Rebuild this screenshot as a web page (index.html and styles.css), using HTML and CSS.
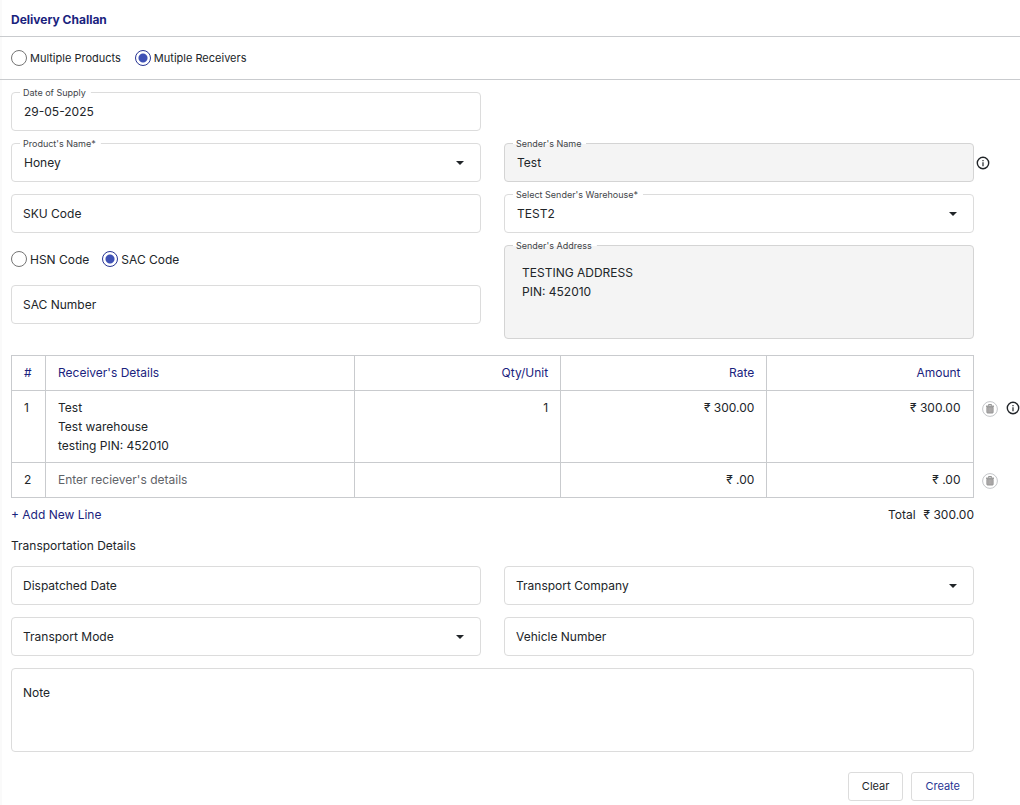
FILE: index.html
```html
<!DOCTYPE html>
<html lang="en">
<head>
<meta charset="utf-8">
<meta name="viewport" content="width=device-width, initial-scale=1">
<title>Delivery Challan</title>
<link rel="stylesheet" href="styles.css">
</head>
<body>
<svg class="sprite" aria-hidden="true">
  <symbol id="info" viewBox="0 0 14 14">
    <circle cx="7" cy="7" r="5.7" fill="none" stroke="currentColor" stroke-width="1.4"/>
    <path d="M6.4 6.2h1.2v4H6.4zM6.4 3.9h1.2v1.3H6.4z" fill="currentColor"/>
  </symbol>
  <symbol id="trash" viewBox="0 0 16 16">
    <circle cx="8" cy="8" r="7.4" fill="none" stroke="#c4c6c9"/>
    <path d="M6.5 4.6V3.6h3v1" fill="none" stroke="#8b8b8b"/>
    <path d="M4 4.6h8v1.2H4z" fill="#8b8b8b"/>
    <path d="M4.9 6.2h6.2v5.3q0 .5-.5.5H5.4q-.5 0-.5-.5z" fill="#b5b2b2" stroke="#8b8b8b" stroke-width=".9"/>
    <path d="M6.9 7v4.2M9.1 7v4.2" stroke="#979797" stroke-width=".7"/>
  </symbol>
</svg>
<header class="page-header">
  <h1 class="page-title">Delivery Challan</h1>
</header>
<form>
  <div class="mode-bar">
    <label class="radio radio-small"><input type="radio" name="mode">Multiple Products</label>
    <label class="radio radio-small"><input type="radio" name="mode" checked>Mutiple Receivers</label>
  </div>
  <main class="content">
    <div class="columns">
      <div class="stack">
        <div class="field">
          <label class="float" for="date">Date of Supply</label>
          <input class="control filled" id="date" type="text" value="29-05-2025">
        </div>
        <div class="field dropdown">
          <label class="float" for="product">Product's Name*</label>
          <select class="control filled" id="product"><option>Honey</option></select>
        </div>
        <div class="field"><input class="control" type="text" aria-label="SKU Code" placeholder="SKU Code"></div>
        <div class="code-choice">
          <label class="radio"><input type="radio" name="code">HSN Code</label>
          <label class="radio"><input type="radio" name="code" checked>SAC Code</label>
        </div>
        <div class="field"><input class="control" type="text" aria-label="SAC Number" placeholder="SAC Number"></div>
      </div>
      <div class="stack sender">
        <div class="field disabled">
          <label class="float" for="sender">Sender's Name</label>
          <input class="control filled" id="sender" type="text" value="Test" readonly>
          <button class="icon-button field-info" type="button" aria-label="Sender information"><svg class="info"><use href="#info"/></svg></button>
        </div>
        <div class="field dropdown">
          <label class="float" for="warehouse">Select Sender's Warehouse*</label>
          <select class="control filled" id="warehouse"><option>TEST2</option></select>
        </div>
        <div class="field disabled">
          <label class="float" for="address">Sender's Address</label>
          <textarea class="control address" id="address" readonly>TESTING ADDRESS
PIN: 452010</textarea>
        </div>
      </div>
    </div>
    <table class="receivers">
      <colgroup><col class="col-index"><col class="col-details"><col class="col-number"><col class="col-number"><col class="col-number"><col class="col-actions"></colgroup>
      <thead>
        <tr><th>#</th><th>Receiver's Details</th><th class="number">Qty/Unit</th><th class="number">Rate</th><th class="number">Amount</th><td class="actions"></td></tr>
      </thead>
      <tbody>
        <tr>
          <td>1</td><td>Test<br>Test warehouse<br>testing PIN: 452010</td><td class="number">1</td><td class="number">₹ 300.00</td><td class="number">₹ 300.00</td>
          <td class="actions"><div class="action-row">
            <button class="icon-button" type="button" aria-label="Delete row 1"><svg class="trash"><use href="#trash"/></svg></button>
            <button class="icon-button" type="button" aria-label="Row 1 information"><svg class="info"><use href="#info"/></svg></button>
          </div></td>
        </tr>
        <tr>
          <td>2</td><td><input class="cell-input" type="text" aria-label="Receiver's details" placeholder="Enter reciever's details"></td><td class="number"></td><td class="number">₹ .00</td><td class="number">₹ .00</td>
          <td class="actions"><div class="action-row">
            <button class="icon-button" type="button" aria-label="Delete row 2"><svg class="trash"><use href="#trash"/></svg></button>
          </div></td>
        </tr>
      </tbody>
    </table>
    <div class="table-footer">
      <button class="add-line" type="button">+ Add New Line</button>
      <div class="total"><span>Total</span><span>₹ 300.00</span></div>
    </div>
    <h2 class="section-title">Transportation Details</h2>
    <div class="transport">
      <div class="field"><input class="control" type="text" aria-label="Dispatched Date" placeholder="Dispatched Date"></div>
      <div class="field dropdown"><select class="control" aria-label="Transport Company"><option>Transport Company</option></select></div>
      <div class="field dropdown"><select class="control" aria-label="Transport Mode"><option>Transport Mode</option></select></div>
      <div class="field"><input class="control" type="text" aria-label="Vehicle Number" placeholder="Vehicle Number"></div>
      <div class="field note-field"><textarea class="control note" aria-label="Note" placeholder="Note"></textarea></div>
    </div>
    <div class="buttons">
      <button class="button" type="reset">Clear</button>
      <button class="button primary" type="submit">Create</button>
    </div>
  </main>
</form>
</body>
</html>
```
FILE: styles.css
```css
* { box-sizing: border-box; }
body {
  margin: 0;
  background: #fff;
  color: #212529;
  font: 12px/19px Inter, "Noto Sans", sans-serif;
  box-shadow: inset 2px 0 #fafafa;
}
input, select, textarea, button { font: inherit; color: inherit; }
.sprite { display: none; }
.page-header { padding: 10px 11px 7px; border-bottom: 1px solid #c9cbce; }
.page-title { margin: 0; font-size: 12px; font-weight: 700; color: #1a237e; }
.mode-bar {
  display: flex;
  gap: 14px;
  align-items: center;
  height: 43px;
  padding: 0 11px;
  border-bottom: 1px solid #c9cbce;
}
.radio { display: flex; align-items: center; gap: 3px; font-size: 12px; }
.radio-small { font-size: 11px; }
.radio input {
  appearance: none;
  width: 16px;
  height: 16px;
  margin: 0;
  border: 1px solid #757575;
  border-radius: 50%;
}
.radio input:checked {
  border-color: #283593;
  background: radial-gradient(circle, #3f51b5 4px, transparent 5px);
}
.content { padding: 12px 46px 4px 11px; }
.columns { display: grid; grid-template-columns: 1fr 1fr; column-gap: 23px; }
.stack { display: flex; flex-direction: column; gap: 12px; }
.sender { padding-top: 51px; }
.code-choice { display: flex; gap: 13px; align-items: center; height: 28px; }
.field { position: relative; display: flex; }
.control {
  appearance: none;
  width: 100%;
  height: 39px;
  margin: 0;
  padding: 0 11px;
  border: 1px solid #dcdcdc;
  border-radius: 4px;
  background: #fff;
  outline: none;
  resize: none;
}
.control::placeholder { color: inherit; opacity: 1; }
.filled { padding: 0 12px; }
.disabled .control { background: #f4f4f4; border-color: #d4d4d4; }
.float {
  position: absolute;
  top: -6px;
  left: 9px;
  padding: 0 5px 0 3px;
  font-size: 9px;
  line-height: 13px;
  color: #424549;
  background: linear-gradient(#fff, #fff) center / 100% 1px no-repeat;
}
.dropdown::after {
  content: "";
  position: absolute;
  right: 17px;
  top: 18px;
  border: 4px solid transparent;
  border-top-color: #212529;
  border-bottom: 0;
  pointer-events: none;
}
.disabled .address { height: 94px; padding: 17px; }
.icon-button { display: flex; padding: 0; border: 0; background: none; cursor: pointer; }
.info { width: 14px; height: 14px; }
.trash { width: 16px; height: 16px; }
.field-info { position: absolute; left: 100%; top: 13px; margin-left: 2px; }
.receivers {
  width: calc(100% + 46px);
  margin: 16px 0 0;
  table-layout: fixed;
  border-collapse: collapse;
}
.col-index { width: 34px; }
.col-details { width: 309px; }
.col-actions { width: 47px; }
.receivers th, .receivers td {
  height: 35px;
  padding: 7px 12px;
  border: 1px solid #c9cbce;
  font-weight: 400;
  text-align: left;
  vertical-align: top;
}
.receivers th { color: #1a237e; }
.receivers .number { text-align: right; }
.receivers .actions { padding: 10px 0 0 8px; border-width: 0 0 0 1px; }
.action-row { display: flex; align-items: flex-start; gap: 8px; }
.cell-input {
  display: block;
  width: 100%;
  height: 19px;
  padding: 0;
  border: 0;
  outline: none;
  background: none;
}
.cell-input::placeholder { color: #5f6368; opacity: 1; }
.table-footer { display: flex; justify-content: space-between; margin-top: 7px; }
.add-line { padding: 0; border: 0; background: none; color: #1a237e; cursor: pointer; }
.total { display: flex; gap: 8px; }
.section-title { margin: 12px 0 11px; font-size: 12px; font-weight: 400; }
.transport { display: grid; grid-template-columns: 1fr 1fr; gap: 12px 23px; }
.note-field { grid-column: 1 / -1; }
.note { height: 84px; padding-top: 14px; }
.buttons { display: flex; justify-content: flex-end; gap: 8px; margin-top: 20px; }
.button {
  height: 29px;
  padding: 0 13px;
  border: 1px solid #dcdcdc;
  border-radius: 3px;
  background: #fff;
  font-size: 11px;
  cursor: pointer;
}
.primary { color: #283593; }
```
